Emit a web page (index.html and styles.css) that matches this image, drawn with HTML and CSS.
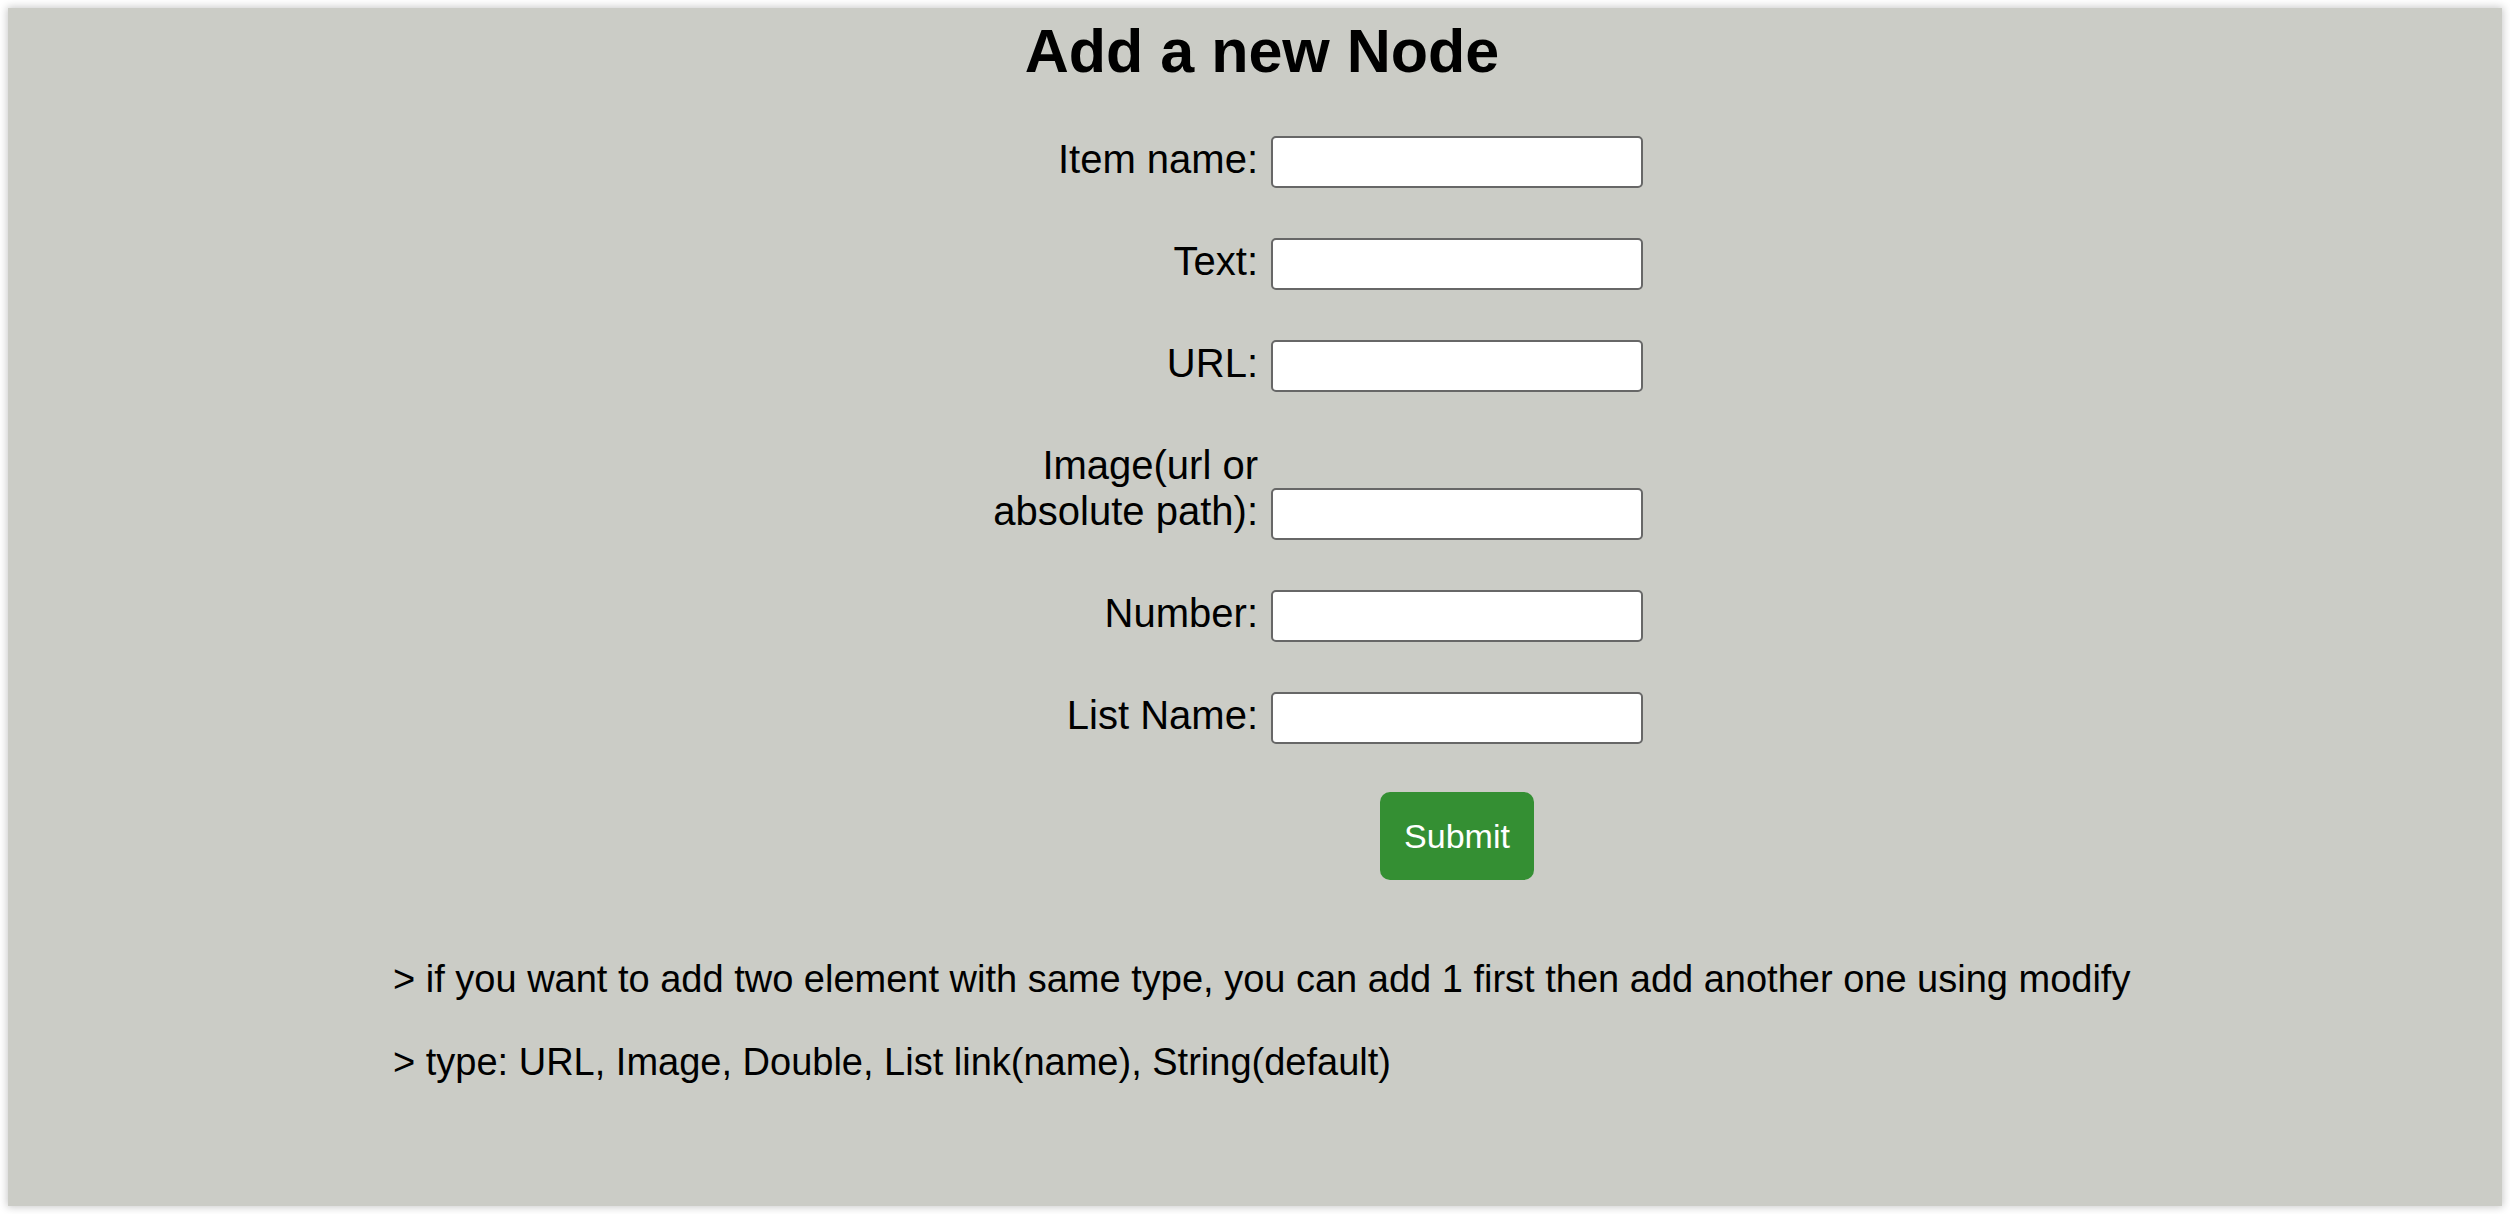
FILE: index.html
```html
<!DOCTYPE html>
<html lang="en">
<head>
<meta charset="utf-8">
<title>Add a new Node</title>
<link rel="stylesheet" href="styles.css">
</head>
<body>
<main class="page">
  <h1 class="title">Add a new Node</h1>
  <form class="form">
    <div class="row">
      <label class="label" for="f-name">Item name:</label>
      <input class="field" id="f-name" type="text">
    </div>
    <div class="row">
      <label class="label" for="f-text">Text:</label>
      <input class="field" id="f-text" type="text">
    </div>
    <div class="row">
      <label class="label" for="f-url">URL:</label>
      <input class="field" id="f-url" type="text">
    </div>
    <div class="row">
      <label class="label" for="f-img">Image(url or absolute path):</label>
      <input class="field" id="f-img" type="text">
    </div>
    <div class="row">
      <label class="label" for="f-num">Number:</label>
      <input class="field" id="f-num" type="text">
    </div>
    <div class="row">
      <label class="label" for="f-list">List Name:</label>
      <input class="field" id="f-list" type="text">
    </div>
    <div class="row">
      <span class="label"></span>
      <div class="submit-cell">
        <button class="submit" type="button">Submit</button>
      </div>
    </div>
  </form>
  <div class="notes">
    <p class="note">&gt; if you want to add two element with same type, you can add 1 first then add another one using modify</p>
    <p class="note">&gt; type: URL, Image, Double, List link(name), String(default)</p>
  </div>
</main>
</body>
</html>
```

FILE: styles.css
```css
html, body {
  margin: 0;
  padding: 0;
  background: #ffffff;
}

body {
  padding: 8px;
  font-family: "Liberation Sans", Arial, Helvetica, sans-serif;
  color: #000;
}

.page {
  background: #cbccc6;
  min-height: calc(100vh - 16px);
  box-sizing: border-box;
  padding-top: 8px;
  box-shadow: 0 0 8px 1px rgba(0, 0, 0, 0.22);
}

.title {
  margin: 0;
  padding-left: 14px;
  font-size: 61px;
  line-height: 70px;
  font-weight: bold;
  text-align: center;
}

.form {
  margin: 50px 0 0 calc(50% - 287px);
  display: flex;
  flex-direction: column;
  gap: 50px;
}

.row {
  display: flex;
  align-items: flex-end;
  gap: 13px;
}

.label {
  width: 290px;
  flex: none;
  text-align: right;
  font-size: 40px;
  line-height: 46px;
  padding-bottom: 6px;
}

.field {
  width: 372px;
  height: 52px;
  box-sizing: border-box;
  margin: 0;
  border: 2px solid #676767;
  border-radius: 5px;
  background: #fff;
  font-family: inherit;
  font-size: 30px;
  padding: 0 8px;
}

.submit-cell {
  width: 372px;
  display: flex;
  justify-content: center;
  margin-top: -2px;
}

.submit {
  height: 88px;
  width: 154px;
  border: none;
  border-radius: 10px;
  background: #348f33;
  color: #fff;
  font-family: "Liberation Sans", Arial, Helvetica, sans-serif;
  font-size: 34px;
  padding: 0;
}

.notes {
  padding-left: 385px;
  margin-top: 77px;
  display: flex;
  flex-direction: column;
  gap: 39px;
}

.note {
  margin: 0;
  font-size: 38px;
  line-height: 44px;
}
```
